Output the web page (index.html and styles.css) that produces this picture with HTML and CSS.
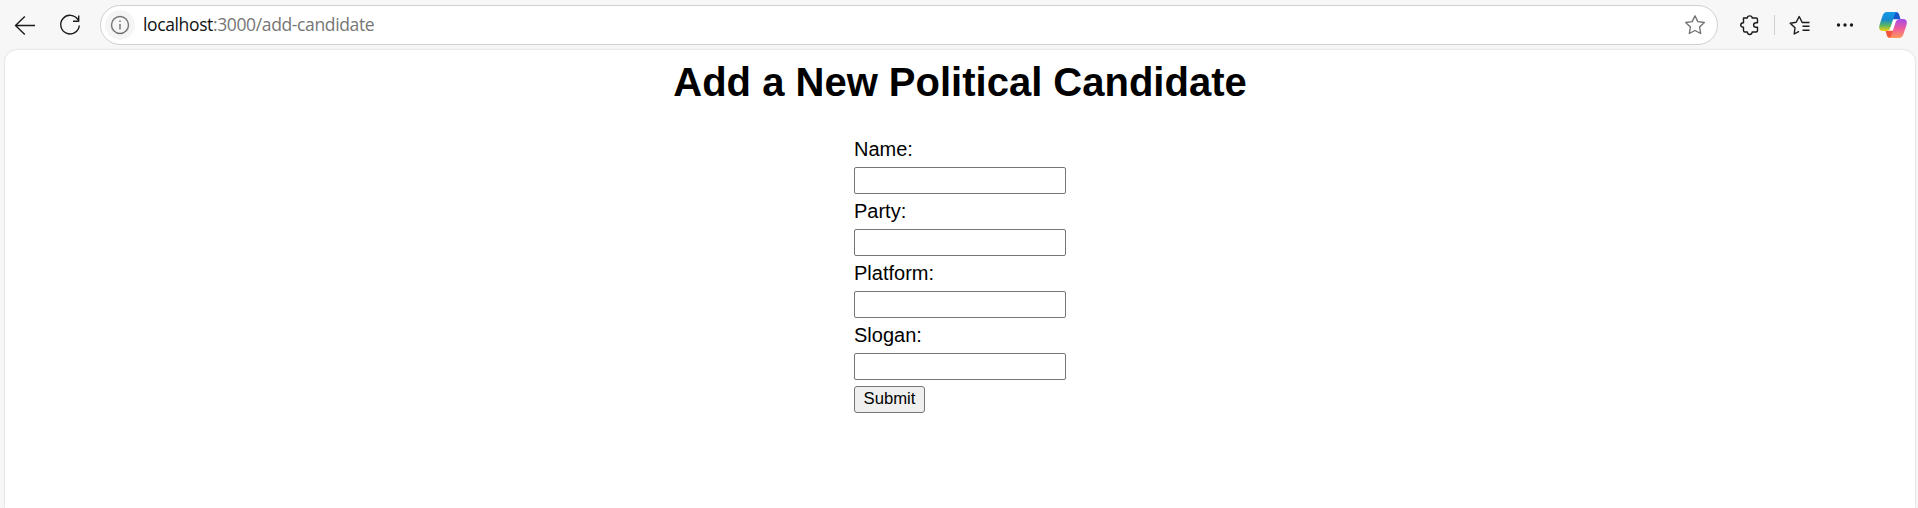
FILE: index.html
```html
<!DOCTYPE html>
<html lang="en">
<head>
<meta charset="utf-8">
<title>Add a New Political Candidate</title>
<link rel="stylesheet" href="styles.css">
</head>
<body>
<header class="toolbar">
  <svg class="icon back" viewBox="0 0 24 24"><path d="M23 12.500H3.500M12.800 3.500L3.500 12.500L12.800 21.500"/></svg>
  <svg class="icon reload" viewBox="0 0 24 24"><path d="M20 6.800A9.300 9.300 0 1 0 21.300 12.500M20.700 2.500V8.200H15"/></svg>
  <div class="address">
    <span class="info"><svg class="icon" viewBox="0 0 24 24"><circle cx="12" cy="12" r="8.500"/><path d="M12 11V16.500"/><path class="dot" d="M12 7.500V9"/></svg></span>
    <span class="url"><span class="host">localhost</span>:3000/add-candidate</span>
    <svg class="icon star" viewBox="0 0 24 24"><path d="M12 2.800L14.800 8.600L21.300 9.500L16.600 14L17.700 20.500L12 17.500L6.300 20.500L7.400 14L2.700 9.500L9.200 8.600Z"/></svg>
  </div>
  <svg class="icon puzzle" viewBox="0 0 24 24"><path d="M5.500 5H9.300C9.500 2.200 14 2.200 14.200 5H18Q19.500 5 19.500 6.500V9.700H18C14.800 9.700 14.800 14.300 18 14.300H19.500V17.500Q19.500 19 18 19H14.200C14 22.300 9.500 22.300 9.300 19H7Q5.500 19 5.500 17.500V14.300C1.800 14.300 1.800 9.700 5.500 9.700V5Z"/></svg>
  <span class="divider"></span>
  <svg class="icon favorites" viewBox="0 0 24 24"><path d="M11 18.300L6.200 21L7 14.800L2.200 10.200L8.200 9.300L11.200 3.500L14.200 9.500H21.500M14.500 13.300H21.500M14.500 17.200H21.500"/></svg>
  <svg class="icon more" viewBox="0 0 24 24"><circle cx="5.500" cy="12" r="1.700"/><circle cx="12" cy="12" r="1.700"/><circle cx="18.500" cy="12" r="1.700"/></svg>
  <svg class="copilot" viewBox="0 0 28 26">
    <defs>
      <linearGradient id="cool" x1="0" y1="0" x2="0" y2="1"><stop offset="0" stop-color="#129bea"/><stop offset=".4" stop-color="#168bd0"/><stop offset=".7" stop-color="#59b567"/><stop offset="1" stop-color="#f4d20b"/></linearGradient>
      <linearGradient id="warm" x1="0" y1="0" x2="0" y2="1"><stop offset="0" stop-color="#a34bea"/><stop offset=".5" stop-color="#ee5b9c"/><stop offset="1" stop-color="#ff9a58"/></linearGradient>
    </defs>
    <path fill="#1757ce" d="M13 0H17Q19.500 0 20.300 3L21.500 7.500H12Z"/>
    <path fill="#f2573d" d="M15 26H11Q8.500 26 7.700 23L6.500 18.500H16Z"/>
    <path fill="#fff" d="M13 7.500H20L15 18.500H8Z"/>
    <path fill="url(#cool)" d="M8 0H18Q16.200 .5 15.500 3L11.500 15.500Q10.500 19 6.500 19H4Q-1 19 .5 13L3.500 4Q4.700 0 8 0Z"/>
    <path fill="url(#warm)" d="M20 26H10Q11.800 25.500 12.500 23L16.500 10.500Q17.500 7 21.500 7H24Q29 7 27.500 13L24.500 22Q23.300 26 20 26Z"/>
  </svg>
</header>
<main class="page">
  <h1 class="title">Add a New Political Candidate</h1>
  <form class="form">
    <label class="label" for="name">Name:</label>
    <input class="field" id="name" type="text">
    <label class="label" for="party">Party:</label>
    <input class="field" id="party" type="text">
    <label class="label" for="platform">Platform:</label>
    <input class="field" id="platform" type="text">
    <label class="label" for="slogan">Slogan:</label>
    <input class="field" id="slogan" type="text">
    <button class="submit" type="button">Submit</button>
  </form>
</main>
</body>
</html>
```
FILE: styles.css
```css
* { box-sizing: border-box; }
body {
  margin: 0;
  height: 508px;
  overflow: hidden;
  display: flex;
  flex-direction: column;
  background: #f7f7f7;
  font-family: "Liberation Sans", Arial, sans-serif;
  color: #000;
}
.toolbar {
  display: flex;
  align-items: center;
  height: 50px;
  flex: none;
  padding: 0 9px 0 12px;
}
.icon {
  width: 24px;
  height: 24px;
  flex: none;
  fill: none;
  stroke: #1b1b1b;
  stroke-width: 1.4;
  stroke-linejoin: round;
}
.reload { margin-left: 22px; }
.address {
  display: flex;
  align-items: center;
  flex: none;
  width: 1618px;
  height: 40px;
  margin-left: 18px;
  padding: 0 10px 0 4px;
  border: 1px solid #cfcfcf;
  border-radius: 20px;
  background: #fff;
}
.info {
  display: flex;
  align-items: center;
  justify-content: center;
  width: 30px;
  height: 30px;
  border-radius: 50%;
  background: #f5f5f5;
}
.info .icon, .star { stroke: #737373; }
.url {
  flex: 1;
  margin-left: 8px;
  padding-bottom: 2px;
  font-family: "Open Sans", "Noto Sans", sans-serif;
  font-size: 17.5px;
  letter-spacing: -.37px;
  color: #767676;
}
.host { color: #111; }
.puzzle { margin-left: 20px; }
.divider {
  width: 1px;
  height: 20px;
  margin-left: 12px;
  background: #cecece;
}
.favorites { margin-left: 13px; }
.more { margin-left: 21px; fill: #1b1b1b; stroke: none; }
.copilot { width: 28px; height: 26px; flex: none; margin-left: 22px; }
.page {
  flex: 1;
  margin: 0 3px 0 5px;
  padding-top: 9px;
  border-radius: 12px 12px 0 0;
  background: #fff;
  box-shadow: 0 0 2px rgba(0, 0, 0, .22);
}
.title {
  margin: 0;
  font-size: 40px;
  line-height: 46px;
  text-align: center;
}
.form {
  display: flex;
  flex-direction: column;
  align-items: flex-start;
  width: 212px;
  margin: 33px auto 0;
}
.label {
  height: 29px;
  font-size: 20px;
  line-height: 23px;
}
.field {
  width: 212px;
  height: 27px;
  margin: 0 0 6px;
  border: 1px solid #767676;
  border-radius: 2px;
  background: #fff;
}
.submit {
  width: 71px;
  height: 27px;
  padding: 0 0 2px;
  border: 1px solid #767676;
  border-radius: 3px;
  background: #efefef;
  font: 16.667px/19px "Liberation Sans", Arial, sans-serif;
  color: #000;
}
```
